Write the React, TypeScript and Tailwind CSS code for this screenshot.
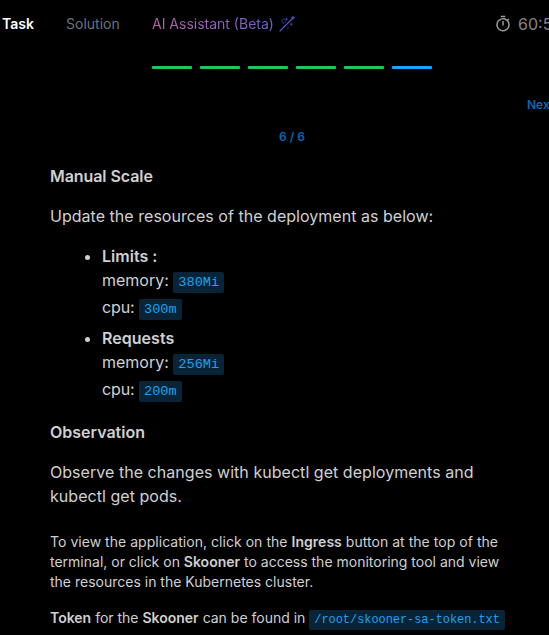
import type { ReactNode } from 'react';

const steps = ['done', 'done', 'done', 'done', 'done', 'current'];

function Code({ children }: { children: ReactNode }) {
  return (
    <code className="rounded-[2px] bg-[#082436] px-[5px] py-[3px] font-['Liberation_Mono',monospace] text-[0.85em] tracking-normal text-[#1ba1f5]">
      {children}
    </code>
  );
}

function Resource({ title, memory, cpu }: { title: string; memory: string; cpu: string }) {
  return (
    <li className="h-[82px]">
      <strong className="block h-6 font-semibold tracking-[0.03px]">{title}</strong>
      <div className="h-[27px]">memory: <Code>{memory}</Code></div>
      <div className="h-[27px] tracking-[-0.1px]">cpu: <Code>{cpu}</Code></div>
    </li>
  );
}

function WandIcon() {
  return (
    <svg width="16" height="16" viewBox="0 0 16 16" fill="none" stroke="#5b55d6" strokeLinecap="round">
      <path d="M1 15 13.5 2.5" strokeWidth="1.1" />
      <path d="M3.2 3.8c-.6 1.8 0 2.6 1.3 3.4M4.5 3.3l1.2-.5M7.5 2.2v2M6.5 3.2h2M12.3 7.2v2M11.3 8.2h2M8.5 12.2h.8M5.8 5.5l.8.5" strokeWidth="0.9" opacity="0.75" />
      <path d="M14 .5v2.6M12.7 1.8h2.6" strokeWidth="1.1" />
    </svg>
  );
}

function TimerIcon() {
  return (
    <svg width="18" height="18" viewBox="0 0 24 24" fill="#9b9b9b">
      <path d="M9 1h6v2H9zM11 8h2v6h-2z" />
      <path d="m19.03 7.39 1.42-1.42c-.43-.51-.9-.99-1.41-1.41l-1.42 1.42A8.96 8.96 0 0 0 12 4a9 9 0 1 0 7.03 3.39zM12 20c-3.87 0-7-3.13-7-7s3.13-7 7-7 7 3.13 7 7-3.13 7-7 7z" />
    </svg>
  );
}

export default function App() {
  return (
    <div className="h-[635px] w-[549px] overflow-hidden bg-black font-['Inter',sans-serif] text-base leading-6 text-[#d0d0d0]">
      <header className="flex h-12 items-center pl-0.5 text-sm whitespace-nowrap">
        <span className="w-16 shrink-0 font-semibold text-white">Task</span>
        <span className="w-[86px] shrink-0 text-[#6b7280]">Solution</span>
        <div className="flex w-[342px] shrink-0 items-center gap-[5px]">
          <span className="bg-gradient-to-r from-[#b95fab] to-[#6e62cd] bg-clip-text text-transparent">AI Assistant (Beta)</span>
          <WandIcon />
        </div>
        <div className="flex shrink-0 items-center gap-1.5 text-base text-[#858585]">
          <TimerIcon />
          <span>60:55</span>
        </div>
      </header>
      <div className="mt-[18px] flex gap-2 pl-[152px]">
        {steps.map((step, index) => (
          <span key={index} className={`h-[3px] w-10 rounded-[1px] ${step === 'done' ? 'bg-[#22c55e]' : 'bg-[#18a5fb]'}`} />
        ))}
      </div>
      <div className="mt-7 flex h-4 pl-[527px] text-xs leading-4 font-semibold whitespace-nowrap text-[#0867b3]">Next</div>
      <div className="mt-4 ml-[279px] h-4 text-xs leading-4 font-semibold text-[#0867b3]">6 / 6</div>
      <main className="mt-[19px] px-[50px]">
        <h2 className="font-semibold tracking-[-0.07px]">Manual Scale</h2>
        <p className="mt-4 tracking-[0.03px]">Update the resources of the deployment as below:</p>
        <ul className="mt-4 list-disc pl-[52px]">
          <Resource title="Limits :" memory="380Mi" cpu="300m" />
          <Resource title="Requests" memory="256Mi" cpu="200m" />
        </ul>
        <h2 className="mt-3 font-semibold">Observation</h2>
        <p className="mt-4 tracking-[0.04px]">Observe the changes with kubectl get deployments and<br />kubectl get pods.</p>
        <div className="mt-6 text-sm leading-5 whitespace-nowrap">
          <p><span className="tracking-[0.035px]">To view the application, click on the <strong className="font-semibold">Ingress</strong> button at the top of the</span><br />terminal, or click on <strong className="font-semibold">Skooner</strong> to access the monitoring tool and view<br />the resources in the Kubernetes cluster.</p>
          <p className="mt-4"><strong className="font-semibold">Token</strong> for the <strong className="font-semibold">Skooner</strong> can be found in <Code>/root/skooner-sa-token.txt</Code></p>
        </div>
      </main>
    </div>
  );
}
